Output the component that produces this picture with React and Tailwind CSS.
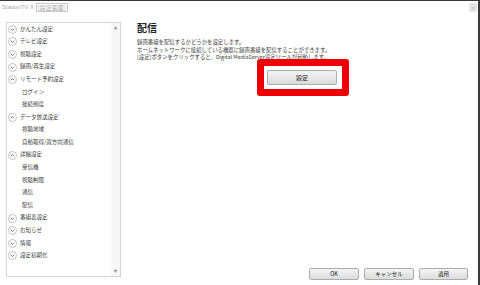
import React from 'react';

const items = [
  { label: 'かんたん設定', type: 'closed' },
  { label: 'テレビ設定', type: 'closed' },
  { label: '視聴設定', type: 'closed' },
  { label: '録画/再生設定', type: 'closed' },
  { label: 'リモート予約設定', type: 'open' },
  { label: 'ログイン', type: 'child' },
  { label: '接続頻度', type: 'child' },
  { label: 'データ放送設定', type: 'open' },
  { label: '視聴地域', type: 'child' },
  { label: '自動取得/双方向通信', type: 'child' },
  { label: '詳細設定', type: 'open' },
  { label: '受信機', type: 'child' },
  { label: '視聴制限', type: 'child' },
  { label: '通信', type: 'child' },
  { label: '配信', type: 'child' },
  { label: '番組表設定', type: 'closed' },
  { label: 'お知らせ', type: 'closed' },
  { label: '情報', type: 'closed' },
  { label: '設定初期化', type: 'closed' },
];

function Toggle({ open }) {
  return (
    <svg width="9" height="9" viewBox="0 0 18 18" className="shrink-0">
      <circle cx="9" cy="9" r="8" fill="#fff" stroke="#a8a8a8" strokeWidth="1.4" />
      <path
        d={open ? 'M5.5 10.5 L9 7 L12.5 10.5' : 'M5.5 7.5 L9 11 L12.5 7.5'}
        fill="none"
        stroke="#555"
        strokeWidth="1.6"
      />
    </svg>
  );
}

function Btn({ children, className = '' }) {
  return (
    <button
      type="button"
      className={`flex items-center justify-center rounded-[2px] border border-[#adadad] bg-gradient-to-b from-[#f4f4f4] to-[#dcdcdc] text-[5.5px] text-[#222] ${className}`}
    >
      {children}
    </button>
  );
}

export default function App() {
  return (
    <div className="flex h-[285px] w-[480px] flex-col overflow-hidden border-t border-r-2 border-[#3a3a3a] bg-white font-['Noto_Sans_CJK_JP','Liberation_Sans',sans-serif]">
      {/* title bar */}
      <div className="flex h-[21px] items-start justify-between pl-[2px]">
        <div className="mt-[2px] flex items-center text-[6px] leading-[7px] text-[#a8a8a8]">
          <span className="font-['Liberation_Sans',sans-serif]">StationTV X&nbsp;</span>
          <span className="border border-[#c8c8c8] px-[1px]">[設定画面]</span>
        </div>
        <div className="mt-[2px] mr-[1px] flex h-[9px] w-[8px] items-center justify-center bg-[#e6e6e6] text-[6px] leading-none text-[#aaa]">
          ×
        </div>
      </div>

      <div className="flex flex-1">
        {/* tree */}
        <div className="ml-[6px] mb-[8px] flex w-[115px] border border-[#d4d4d4]">
          <div className="flex-1">
            {items.map((it, i) => (
              <div
                key={i}
                className={`flex h-[12.6px] items-center text-[5.5px] text-[#3a3a3a] ${
                  it.type === 'child' ? 'pl-[15px]' : 'gap-[3px] pl-[1px]'
                }`}
              >
                {it.type !== 'child' && <Toggle open={it.type === 'open'} />}
                <span className="leading-none">{it.label}</span>
              </div>
            ))}
          </div>
          <div className="flex w-[9px] flex-col items-center justify-between bg-[#f7f7f7] py-[3px] text-[4px] leading-none text-[#999]">
            <span>▲</span>
            <span>▼</span>
          </div>
        </div>

        {/* content */}
        <div className="ml-[16px] flex flex-1 flex-col justify-between pr-[10px]">
          <div>
            <h2 className="text-[10px] leading-[12px] font-bold text-[#222]">配信</h2>
            <div className="mt-[5px] text-[5.4px] leading-[7.5px] text-[#3a3a3a]">
              <p>録画番組を配信するかどうかを設定します。</p>
              <p>ホームネットワークに接続している機器に録画番組を配信することができます。</p>
              <p>[設定]ボタンをクリックすると、Digital MediaServer設定ツールが起動します。</p>
            </div>
            <div className="relative mt-[8.5px] ml-[130px] w-[70px]">
              <div className="absolute -top-[11px] -right-[12px] -bottom-[11px] -left-[10px] rounded-[3px] border-[7px] border-[#ee0000] bg-white" />
              <Btn className="relative h-[15px] w-[70px] text-[6px]">設定</Btn>
            </div>
          </div>
          <div className="mb-[5px] flex justify-end gap-[5px]">
            <Btn className="h-[12px] w-[50px]">OK</Btn>
            <Btn className="h-[12px] w-[50px]">キャンセル</Btn>
            <Btn className="h-[12px] w-[49px]">適用</Btn>
          </div>
        </div>
      </div>
    </div>
  );
}
